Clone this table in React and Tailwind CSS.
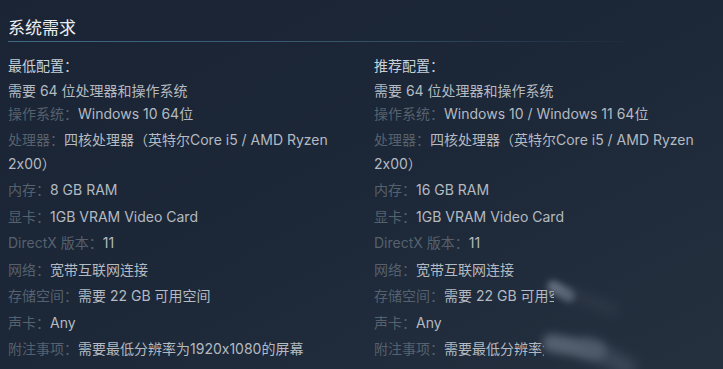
const minSpecs = [
  { label: "操作系统：", value: "Windows 10 64位" },
  { label: "处理器：", value: "四核处理器（英特尔Core i5 / AMD Ryzen 2x00）" },
  { label: "内存：", value: "8 GB RAM" },
  { label: "显卡：", value: "1GB VRAM Video Card" },
  { label: "DirectX 版本：", value: "11" },
  { label: "网络：", value: "宽带互联网连接" },
  { label: "存储空间：", value: "需要 22 GB 可用空间" },
  { label: "声卡：", value: "Any" },
  { label: "附注事项：", value: "需要最低分辨率为1920x1080的屏幕" },
];

const recSpecs = [
  { label: "操作系统：", value: "Windows 10 / Windows 11 64位" },
  { label: "处理器：", value: "四核处理器（英特尔Core i5 / AMD Ryzen 2x00）" },
  { label: "内存：", value: "16 GB RAM" },
  { label: "显卡：", value: "1GB VRAM Video Card" },
  { label: "DirectX 版本：", value: "11" },
  { label: "网络：", value: "宽带互联网连接" },
  { label: "存储空间：", value: "需要 22 GB 可用空间", clip: "w-[110px]" },
  { label: "声卡：", value: "Any" },
  { label: "附注事项：", value: "需要最低分辨率为1920x1080的屏幕", clip: "w-[100px]" },
];

function SpecColumn({ title, specs }) {
  return (
    <div className="flex flex-col">
      <div className="leading-[23px] text-[#c8d0d8]">{title}</div>
      <div className="mt-[1.5px] leading-[23px] text-[#b4bac0]">需要 64 位处理器和操作系统</div>
      <ul className="flex flex-col gap-[3px]">
        {specs.map((s) => (
          <li key={s.label} className="leading-[23.5px]">
            <span className="text-[#56616d]">{s.label}</span>
            {s.clip ? (
              <span className={`inline-block overflow-hidden whitespace-nowrap align-top text-[#b4bac0] ${s.clip}`}>
                {s.value}
              </span>
            ) : (
              <span className="text-[#b4bac0]">{s.value}</span>
            )}
          </li>
        ))}
      </ul>
    </div>
  );
}

export default function App() {
  return (
    <div
      className="relative h-[369px] w-[723px] overflow-hidden bg-gradient-to-br from-[#1a2434] via-[#1c2738] to-[#25303f] text-[14px] [font-feature-settings:'calt'_0]"
      style={{ fontFamily: 'Inter, "Liberation Sans", "Noto Sans CJK SC", sans-serif' }}
    >
      <div className="pl-2 pt-[16px]">
        <h2 className="text-[17px] leading-[24px] text-[#eceef0]">系统需求</h2>
        <div className="mt-[1px] h-px w-[640px] bg-gradient-to-r from-[#3f6a84] via-[#34566d] to-transparent" />
        <div className="mt-[12px] grid grid-cols-[350px_345px] gap-x-4">
          <SpecColumn title="最低配置：" specs={minSpecs} />
          <SpecColumn title="推荐配置：" specs={recSpecs} />
        </div>
      </div>

      {/* smudge over the right column */}
      <div className="pointer-events-none absolute left-[546px] top-[285px] h-[12px] w-[30px] rotate-[30deg] rounded-full bg-[#7d8998]/70 blur-[3px]" />
      <div className="pointer-events-none absolute left-[542px] top-[338px] h-[18px] w-[64px] rotate-[10deg] rounded-full bg-[#6a7584]/70 blur-[4px]" />
      <div className="pointer-events-none absolute left-[575px] top-[348px] h-[18px] w-[64px] rotate-[28deg] rounded-full bg-[#4a5565]/60 blur-[6px]" />
      <div className="pointer-events-none absolute left-[560px] top-[296px] h-[10px] w-[60px] rotate-[20deg] rounded-full bg-[#3a4454]/50 blur-[6px]" />
    </div>
  );
}
